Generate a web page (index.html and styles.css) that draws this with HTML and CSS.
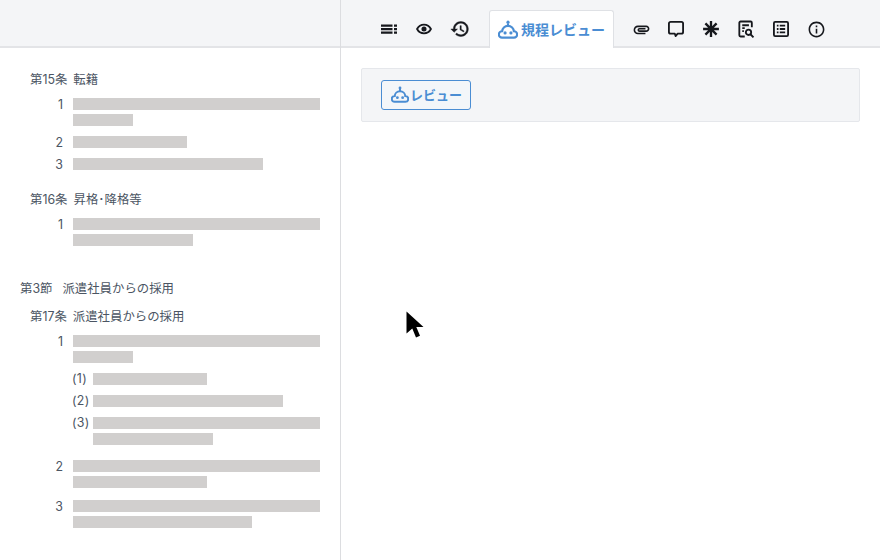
FILE: index.html
```html
<!DOCTYPE html>
<html lang="ja">
<head>
<meta charset="utf-8">
<title>規程レビュー</title>
<link rel="stylesheet" href="styles.css">
</head>
<body>
<div class="app">
  <header class="header">
    <div class="header-left"></div>
    <nav class="toolbar">
      <span class="tool"><svg class="icon" viewBox="0 0 24 24"><path d="M4 7.500h11.500v2.200H4zM4 11h11.500v2.200H4zM4 14.500h11.500v2.200H4zM17 7.500h3v2.200h-3zM17 11h3v2.200h-3zM17 14.500h3v2.200h-3z"/></svg></span>
      <span class="tool"><svg class="icon icon-16" viewBox="0 0 24 24"><path class="stroke eye" d="M12 5.500C7.300 5.500 3.600 8.200 1.600 12c2 3.800 5.700 6.500 10.400 6.500s8.400-2.700 10.400-6.500c-2-3.800-5.700-6.500-10.400-6.500z"/><circle cx="12" cy="12" r="3.800"/></svg></span>
      <span class="tool tool-shift"><svg class="icon icon-20 heavy" viewBox="0 0 24 24"><path d="M13 3c-4.970 0-9 4.030-9 9H1l3.890 3.890.07.140L9 12H6c0-3.870 3.130-7 7-7s7 3.130 7 7-3.130 7-7 7c-1.930 0-3.680-.79-4.940-2.060l-1.420 1.420C8.270 19.990 10.510 21 13 21c4.970 0 9-4.030 9-9s-4.030-9-9-9zm-1 5v5l4.280 2.540.72-1.210-3.500-2.080V8H12z"/></svg></span>
      <span class="tab">
        <svg class="robot robot-lg" viewBox="0 0 24 24"><circle cx="12" cy="2.600" r="1.900" class="fill"/><path class="line" d="M12 4v3.500"/><path class="line" d="M5 13.500a7 6.500 0 0 1 14 0h.2a3.800 3.800 0 0 1 0 7.600H4.800a3.800 3.800 0 0 1 0-7.600z"/><circle cx="8.500" cy="15.500" r="1.900" class="fill"/><circle cx="15.500" cy="15.500" r="1.900" class="fill"/></svg>
        <span>規程レビュー</span>
      </span>
      <span class="tool tool-after"><svg class="icon icon-19" viewBox="0 0 24 24"><path d="M2 12.500C2 9.460 4.460 7 7.500 7H18c2.210 0 4 1.790 4 4s-1.790 4-4 4H9.500C8.120 15 7 13.880 7 12.500S8.120 10 9.500 10H17v2H9.410c-.55 0-.55 1 0 1H18c1.100 0 2-.9 2-2s-.9-2-2-2H7.500C5.570 9 4 10.570 4 12.500S5.570 16 7.500 16H17v2H7.500C4.460 18 2 15.540 2 12.500z"/></svg></span>
      <span class="tool"><svg class="icon icon-20" viewBox="0 0 24 24"><path class="stroke" d="M5.500 3.500h13a2 2 0 0 1 2 2v10a2 2 0 0 1-2 2h-4.500l-2.500 3-1-3H5.500a2 2 0 0 1-2-2v-10a2 2 0 0 1 2-2z"/></svg></span>
      <span class="tool"><svg class="icon icon-20" viewBox="0 0 24 24"><path class="stroke thick" d="M12 2.500v19M2.500 12h19M5.300 5.300l13.400 13.400M18.700 5.300L5.300 18.700"/></svg></span>
      <span class="tool"><svg class="icon icon-20" viewBox="0 0 24 24"><path class="stroke" d="M10.500 21H5.500a1.500 1.500 0 0 1-1.500-1.500v-15A1.500 1.500 0 0 1 5.500 3h12A1.500 1.500 0 0 1 19 4.500V10"/><path class="stroke" d="M7.500 7.500h8M7.500 11h3M7.500 14.500h2"/><circle class="stroke" cx="15" cy="16" r="3.200"/><path class="stroke" d="M17.300 18.300l3.700 3.700"/></svg></span>
      <span class="tool"><svg class="icon icon-20" viewBox="0 0 24 24"><rect class="stroke" x="3.500" y="3.500" width="17" height="17" rx="1.500"/><path class="stroke" d="M10.500 8h6.500M10.500 12h6.500M10.500 16h6.500M7 8h2M7 12h2M7 16h2"/></svg></span>
      <span class="tool"><svg class="icon icon-19" viewBox="0 0 24 24"><path d="M11 7h2v2h-2zm0 4h2v6h-2zm1-9C6.480 2 2 6.480 2 12s4.480 10 10 10 10-4.480 10-10S17.520 2 12 2zm0 18c-4.410 0-8-3.590-8-8s3.590-8 8-8 8 3.590 8 8-3.590 8-8 8z"/></svg></span>
    </nav>
  </header>
  <div class="body">
    <aside class="doc">
      <section class="article">
        <h3 class="article-title"><span>第15条</span><span>転籍</span></h3>
        <div class="item"><span class="num">1</span><div class="bars"><i class="bar w-full"></i><i class="bar w-60"></i></div></div>
        <div class="item"><span class="num">2</span><div class="bars"><i class="bar w-114"></i></div></div>
        <div class="item"><span class="num">3</span><div class="bars"><i class="bar w-190"></i></div></div>
      </section>
      <section class="article">
        <h3 class="article-title"><span>第16条</span><span>昇格･降格等</span></h3>
        <div class="item"><span class="num">1</span><div class="bars"><i class="bar w-full"></i><i class="bar w-120"></i></div></div>
      </section>
      <h2 class="section-title"><span>第3節</span><span>派遣社員からの採用</span></h2>
      <section class="article article-tight">
        <h3 class="article-title"><span>第17条</span><span>派遣社員からの採用</span></h3>
        <div class="item"><span class="num">1</span><div class="bars"><i class="bar w-full"></i><i class="bar w-60"></i></div></div>
        <div class="sub"><span class="sub-num">(1)</span><div class="bars"><i class="bar w-114"></i></div></div>
        <div class="sub"><span class="sub-num">(2)</span><div class="bars"><i class="bar w-190"></i></div></div>
        <div class="sub"><span class="sub-num">(3)</span><div class="bars"><i class="bar w-full"></i><i class="bar w-120"></i></div></div>
        <div class="item item-gap"><span class="num">2</span><div class="bars"><i class="bar w-full"></i><i class="bar w-134"></i></div></div>
        <div class="item item-gap-sm"><span class="num">3</span><div class="bars"><i class="bar w-full"></i><i class="bar w-179"></i></div></div>
      </section>
    </aside>
    <main class="pane">
      <div class="panel">
        <button class="review" type="button">
          <svg class="robot robot-sm" viewBox="0 0 24 24"><circle cx="12" cy="2.600" r="1.900" class="fill"/><path class="line" d="M12 4v3.500"/><path class="line" d="M5 13.500a7 6.500 0 0 1 14 0h.2a3.800 3.800 0 0 1 0 7.600H4.800a3.800 3.800 0 0 1 0-7.600z"/><circle cx="8.500" cy="15.500" r="1.900" class="fill"/><circle cx="15.500" cy="15.500" r="1.900" class="fill"/></svg>
          <span>レビュー</span>
        </button>
      </div>
    </main>
  </div>
  <svg class="cursor" viewBox="0 0 18 28"><path d="M0.500 0.500V22.500L6.300 17.500 10 26.500 14 24.800 10.300 16H17.500z"/></svg>
</div>
</body>
</html>
```
FILE: styles.css
```css
* { box-sizing: border-box; }
html, body { margin: 0; padding: 0; background: #fff; }
body { font-family: "Inter", "Noto Sans CJK JP", "Liberation Sans", sans-serif; }

.app { position: relative; width: 880px; height: 560px; overflow: hidden; display: flex; flex-direction: column; }

.header { height: 48px; flex: none; display: flex; background: #f4f5f7; border-bottom: 2px solid #e3e4e7; }
.header-left { width: 341px; flex: none; border-right: 1px solid #dcdde0; margin-bottom: -2px; }
.toolbar { flex: 1; display: flex; align-items: flex-end; gap: 11px; padding-left: 36px; }
.tool { width: 24px; height: 24px; margin-bottom: 5px; display: flex; align-items: center; justify-content: center; }
.tool-shift { margin-left: 1px; }
.tool-after { margin-left: 4px; }
.icon { width: 24px; height: 24px; fill: #16181d; flex: none; }
.icon-16 { width: 16px; height: 16px; }
.icon-19 { width: 19px; height: 19px; }
.icon-20 { width: 20px; height: 20px; }
.heavy { stroke: #16181d; stroke-width: 0.500; }
.icon .stroke { fill: none; stroke: #16181d; stroke-width: 2.200; stroke-linejoin: round; }
.icon .eye { stroke-width: 2.800; }
.icon .thick { stroke-width: 2.800; }

.tab { width: 125px; height: 38px; margin-left: 6px; margin-bottom: -2px; padding-left: 8px; display: flex; align-items: center; gap: 3px; background: #fff; border: 1px solid #dfe1e5; border-bottom: none; border-radius: 3px 3px 0 0; color: #4a8dd3; font-size: 14px; font-weight: 700; line-height: 18px; }

.robot { flex: none; }
.robot .line { fill: none; stroke: #4a8dd3; stroke-width: 2.600; }
.robot .fill { fill: #4a8dd3; }
.robot-lg { width: 20px; height: 20px; }
.robot-sm { width: 18px; height: 18px; }

.body { flex: 1; display: flex; min-height: 0; }
.doc { width: 341px; flex: none; border-right: 1px solid #dcdde0; padding: 23px 20px 0; color: #4b5563; font-size: 12.400px; line-height: 16px; }
.article { padding-left: 10px; margin-bottom: 19px; }
.article-tight { margin-top: 12px; }
.article-title { margin: 0 0 9px; height: 16px; padding-top: 1px; font-size: 12.400px; font-weight: 400; line-height: 16px; display: flex; gap: 6px; }
.section-title { margin: 32px 0 0; height: 16px; padding-top: 1px; font-size: 12.400px; font-weight: 400; line-height: 16px; display: flex; gap: 10px; }

.item { display: flex; gap: 10px; margin-top: 6px; }
.item:nth-child(2) { margin-top: 0; }
.item-gap { margin-top: 11px; }
.item-gap-sm { margin-top: 8px; }
.num { width: 33px; height: 16px; padding-top: 1px; flex: none; text-align: right; }
.sub { display: flex; gap: 5px; margin-top: 6px; padding-left: 42px; }
.sub-num { width: 16px; height: 16px; flex: none; white-space: nowrap; letter-spacing: 0.300px; }
.bars { flex: 1; display: flex; flex-direction: column; gap: 4px; padding: 2px 0; }
.bar { display: block; height: 12px; background: #d1cfce; }
.w-full { width: 100%; }
.w-60 { width: 60px; }
.w-114 { width: 114px; }
.w-120 { width: 120px; }
.w-134 { width: 134px; }
.w-179 { width: 179px; }
.w-190 { width: 190px; }

.pane { flex: 1; padding: 20px 20px 0; }
.panel { height: 54px; padding: 11px 19px; background: #f4f5f7; border: 1px solid #e5e7eb; border-radius: 2px; }
.review { width: 90px; height: 30px; padding: 0 0 0 9px; display: flex; align-items: center; gap: 1px; background: #f3f6f9; border: 1px solid #4a8dd3; border-radius: 3px; color: #4a8dd3; font: 700 13px/18px "Inter", "Noto Sans CJK JP", sans-serif; }

.cursor { position: absolute; left: 406px; top: 311px; width: 18px; height: 28px; fill: #000; }
```
